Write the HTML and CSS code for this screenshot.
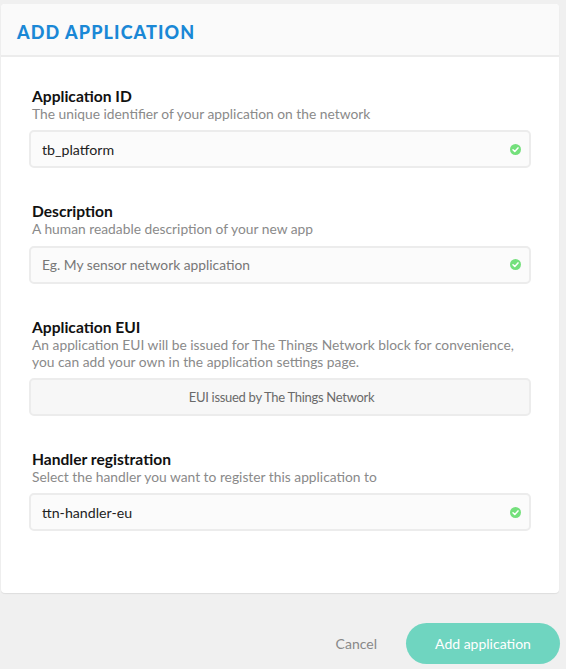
FILE: index.html
```html
<!DOCTYPE html>
<html>
<head>
<meta charset="utf-8">
<link rel="stylesheet" href="styles.css">
</head>
<body>
<div class="card">
  <div class="card-header"><h1 class="title">ADD APPLICATION</h1></div>
  <div class="card-body">
    <div class="field">
      <div class="label">Application ID</div>
      <div class="desc">The unique identifier of your application on the network</div>
      <div class="input"><span class="value">tb_platform</span><span class="check"><svg width="11" height="11" viewBox="0 0 11 11"><circle cx="5.5" cy="5.5" r="5.5" fill="#74e07c"/><path d="M3 5.7 L4.8 7.4 L8 3.9" fill="none" stroke="#fff" stroke-width="1.5" stroke-linecap="round" stroke-linejoin="round"/></svg></span></div>
    </div>
    <div class="field">
      <div class="label">Description</div>
      <div class="desc">A human readable description of your new app</div>
      <div class="input"><span class="placeholder">Eg. My sensor network application</span><span class="check"><svg width="11" height="11" viewBox="0 0 11 11"><circle cx="5.5" cy="5.5" r="5.5" fill="#74e07c"/><path d="M3 5.7 L4.8 7.4 L8 3.9" fill="none" stroke="#fff" stroke-width="1.5" stroke-linecap="round" stroke-linejoin="round"/></svg></span></div>
    </div>
    <div class="field">
      <div class="label">Application EUI</div>
      <div class="desc">An application EUI will be issued for The Things Network block for convenience, you can add your own in the application settings page.</div>
      <div class="input input-static">EUI issued by The Things Network</div>
    </div>
    <div class="field">
      <div class="label">Handler registration</div>
      <div class="desc">Select the handler you want to register this application to</div>
      <div class="input"><span class="value">ttn-handler-eu</span><span class="check"><svg width="11" height="11" viewBox="0 0 11 11"><circle cx="5.5" cy="5.5" r="5.5" fill="#74e07c"/><path d="M3 5.7 L4.8 7.4 L8 3.9" fill="none" stroke="#fff" stroke-width="1.5" stroke-linecap="round" stroke-linejoin="round"/></svg></span></div>
    </div>
  </div>
</div>
<div class="actions">
  <button class="btn-cancel">Cancel</button>
  <button class="btn-primary">Add application</button>
</div>
</body>
</html>
```

FILE: styles.css
```css
html, body {
  margin: 0;
  padding: 0;
}
body {
  background: #f0f0f0;
  font-family: Lato, "Open Sans", sans-serif;
  color: #111;
}
.card {
  margin: 4px 0 0 1px;
  width: 558px;
  background: #fff;
  border-radius: 4px;
  box-shadow: 0 1px 1px rgba(0,0,0,0.08);
  overflow: hidden;
}
.card-header {
  height: 51px;
  background: #fafafa;
  border-bottom: 2px solid #ececec;
  display: flex;
  align-items: center;
  padding-left: 16px;
}
.title {
  margin: 0;
  font-size: 18px;
  font-weight: 900;
  letter-spacing: 1.1px;
  color: #1a88d6;
  line-height: 1;
  padding-top: 4px;
}
.card-body {
  padding: 30px 28px 62px 28px;
  display: flex;
  flex-direction: column;
  gap: 34px;
}
.field {
  display: flex;
  flex-direction: column;
}
.label {
  font-size: 15.6px;
  font-weight: 700;
  line-height: 18px;
  padding-left: 3px;
  color: #111;
}
.desc {
  font-size: 13.8px;
  line-height: 17.3px;
  color: #8a8a8a;
  padding-left: 3px;
  margin-bottom: 8px;
}
.input {
  height: 34px;
  border: 2px solid #ececec;
  border-radius: 5px;
  background: #fbfbfb;
  display: flex;
  align-items: center;
  justify-content: space-between;
  padding: 0 8px 0 11px;
  font-size: 14.2px;
}
.value { color: #222; }
.placeholder { color: #777; font-size: 13.8px; }
.check { display: flex; }
.input-static {
  justify-content: center;
  background: #f7f7f7;
  font-size: 13px;
  letter-spacing: -0.3px;
  color: #6a6a6a;
}
.actions {
  display: flex;
  justify-content: flex-end;
  align-items: center;
  gap: 29px;
  margin-top: 30px;
  width: 560px;
}
.btn-cancel {
  border: none;
  background: none;
  padding: 0;
  font-family: inherit;
  font-size: 14px;
  color: #888;
}
.btn-primary {
  border: none;
  width: 154px;
  height: 41px;
  border-radius: 21px;
  background: #6fd5c0;
  color: #fff;
  font-family: inherit;
  font-size: 14px;
}
```
